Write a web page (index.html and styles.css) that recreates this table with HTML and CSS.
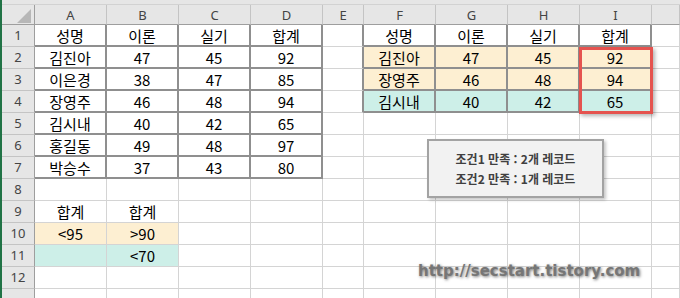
FILE: index.html
```html
<!DOCTYPE html>
<html lang="ko">
<head>
<meta charset="utf-8">
<link rel="stylesheet" href="styles.css">
</head>
<body>
<div class="sheet">
  <div class="strip"></div>
  <div class="grid">
    <div class="h corner"><svg class="tri" width="33" height="20" viewBox="0 0 33 20"><polygon points="15,18 29,18 29,4" fill="#b7b7b7"/></svg></div>
    <div class="h">A</div><div class="h">B</div><div class="h">C</div><div class="h">D</div><div class="h">E</div><div class="h">F</div><div class="h">G</div><div class="h">H</div><div class="h">I</div><div class="h"></div>

    <div class="rh">1</div><div class="c tb">성명</div><div class="c tb">이론</div><div class="c tb">실기</div><div class="c tb">합계</div><div class="c er"></div><div class="c tb">성명</div><div class="c tb">이론</div><div class="c tb">실기</div><div class="c tb">합계</div><div class="c"></div>

    <div class="rh">2</div><div class="c tb">김진아</div><div class="c tb">47</div><div class="c tb">45</div><div class="c tb">92</div><div class="c er"></div><div class="c tb pe">김진아</div><div class="c tb pe">47</div><div class="c tb pe">45</div><div class="c tb pe">92</div><div class="c"></div>

    <div class="rh">3</div><div class="c tb">이은경</div><div class="c tb">38</div><div class="c tb">47</div><div class="c tb">85</div><div class="c er"></div><div class="c tb pe">장영주</div><div class="c tb pe">46</div><div class="c tb pe">48</div><div class="c tb pe">94</div><div class="c"></div>

    <div class="rh">4</div><div class="c tb">장영주</div><div class="c tb">46</div><div class="c tb">48</div><div class="c tb">94</div><div class="c er"></div><div class="c tb te">김시내</div><div class="c tb te">40</div><div class="c tb te">42</div><div class="c tb te">65</div><div class="c"></div>

    <div class="rh">5</div><div class="c tb">김시내</div><div class="c tb">40</div><div class="c tb">42</div><div class="c tb">65</div><div class="c"></div><div class="c"></div><div class="c"></div><div class="c"></div><div class="c"></div><div class="c"></div>

    <div class="rh">6</div><div class="c tb">홍길동</div><div class="c tb">49</div><div class="c tb">48</div><div class="c tb">97</div><div class="c"></div><div class="c"></div><div class="c"></div><div class="c"></div><div class="c"></div><div class="c"></div>

    <div class="rh">7</div><div class="c tb">박승수</div><div class="c tb">37</div><div class="c tb">43</div><div class="c tb">80</div><div class="c"></div><div class="c"></div><div class="c"></div><div class="c"></div><div class="c"></div><div class="c"></div>

    <div class="rh">8</div><div class="c"></div><div class="c"></div><div class="c"></div><div class="c"></div><div class="c"></div><div class="c"></div><div class="c"></div><div class="c"></div><div class="c"></div><div class="c"></div>

    <div class="rh">9</div><div class="c">합계</div><div class="c">합계</div><div class="c"></div><div class="c"></div><div class="c"></div><div class="c"></div><div class="c"></div><div class="c"></div><div class="c"></div><div class="c"></div>

    <div class="rh">10</div><div class="c pe">&lt;95</div><div class="c pe">&gt;90</div><div class="c"></div><div class="c"></div><div class="c"></div><div class="c"></div><div class="c"></div><div class="c"></div><div class="c"></div><div class="c"></div>

    <div class="rh">11</div><div class="c te"></div><div class="c te">&lt;70</div><div class="c"></div><div class="c"></div><div class="c"></div><div class="c"></div><div class="c"></div><div class="c"></div><div class="c"></div><div class="c"></div>

    <div class="rh">12</div><div class="c"></div><div class="c"></div><div class="c"></div><div class="c"></div><div class="c"></div><div class="c"></div><div class="c"></div><div class="c"></div><div class="c"></div><div class="c"></div>

    <div class="rh"></div><div class="c"></div><div class="c"></div><div class="c"></div><div class="c"></div><div class="c"></div><div class="c"></div><div class="c"></div><div class="c"></div><div class="c"></div><div class="c"></div>
  </div>

  <div class="redbox"></div>
  <div class="note">
    <div>조건1 만족 : 2개 레코드</div>
    <div>조건2 만족 : 1개 레코드</div>
  </div>
  <div class="mark">http://secstart.tistory.com</div>
</div>
</body>
</html>
```

FILE: styles.css
```css
html, body {
  margin: 0;
  padding: 0;
  background: #ffffff;
}
body {
  width: 680px;
  height: 298px;
  overflow: hidden;
}
.sheet {
  position: relative;
  width: 678px;
  height: 298px;
  border-left: 2px solid #217346;
  overflow: hidden;
}
.strip {
  height: 5px;
  box-sizing: border-box;
  background: #e6e6e6;
  border-bottom: 1px solid #d2d2d2;
}
.grid {
  display: grid;
  grid-template-columns: 33px repeat(4, 72px) 41px repeat(4, 72px) 1fr;
  grid-template-rows: 20px repeat(13, 22px);
}
.grid > div {
  box-sizing: border-box;
  display: flex;
  align-items: center;
  justify-content: center;
  line-height: 1;
}
.h {
  background: #e6e6e6;
  border-right: 1px solid #c4c4c4;
  border-bottom: 1px solid #9e9e9e;
  font: 13px "Noto Sans", "DejaVu Sans", sans-serif;
  color: #444444;
  padding-top: 1px;
}
.corner {
  border-right: 1px solid #9e9e9e;
  position: relative;
}
.tri {
  position: absolute;
  left: 0;
  top: 0;
}
.rh {
  background: #e6e6e6;
  border-right: 1px solid #9e9e9e;
  border-bottom: 1px solid #c4c4c4;
  font: 13px "Noto Sans", "DejaVu Sans", sans-serif;
  color: #444444;
}
.c {
  border-right: 1px solid #d4d4d4;
  border-bottom: 1px solid #d4d4d4;
  font: 15px "Noto Sans CJK KR", "Noto Sans", sans-serif;
  color: #000000;
}
.tb {
  border-right: 2px solid #8f8f8f;
  border-bottom: 2px solid #8f8f8f;
}
.er {
  border-right: 2px solid #8f8f8f;
}
.pe {
  background: #fdefd2;
}
.te {
  background: #cdefe8;
}
.redbox {
  position: absolute;
  left: 577px;
  top: 47px;
  width: 74px;
  height: 67px;
  box-sizing: border-box;
  border: 3px solid #e5534f;
  box-shadow: 2px 2px 4px rgba(0, 0, 0, 0.3);
}
.note {
  position: absolute;
  left: 425px;
  top: 139px;
  width: 177px;
  height: 59px;
  box-sizing: border-box;
  background: #f2f2f2;
  border: 2px solid #a3a3a3;
  box-shadow: 2px 2px 3px rgba(0, 0, 0, 0.22);
  display: flex;
  flex-direction: column;
  justify-content: center;
  align-items: center;
  font: bold 12px "Noto Sans CJK KR", "Noto Sans", sans-serif;
  color: #404040;
  line-height: 20px;
}
.mark {
  position: absolute;
  left: 416px;
  top: 262px;
  font: bold 15px "DejaVu Sans", sans-serif;
  color: #767676;
  line-height: 18px;
  text-shadow: 1px 1px 3px rgba(0, 0, 0, 0.55);
}
```
